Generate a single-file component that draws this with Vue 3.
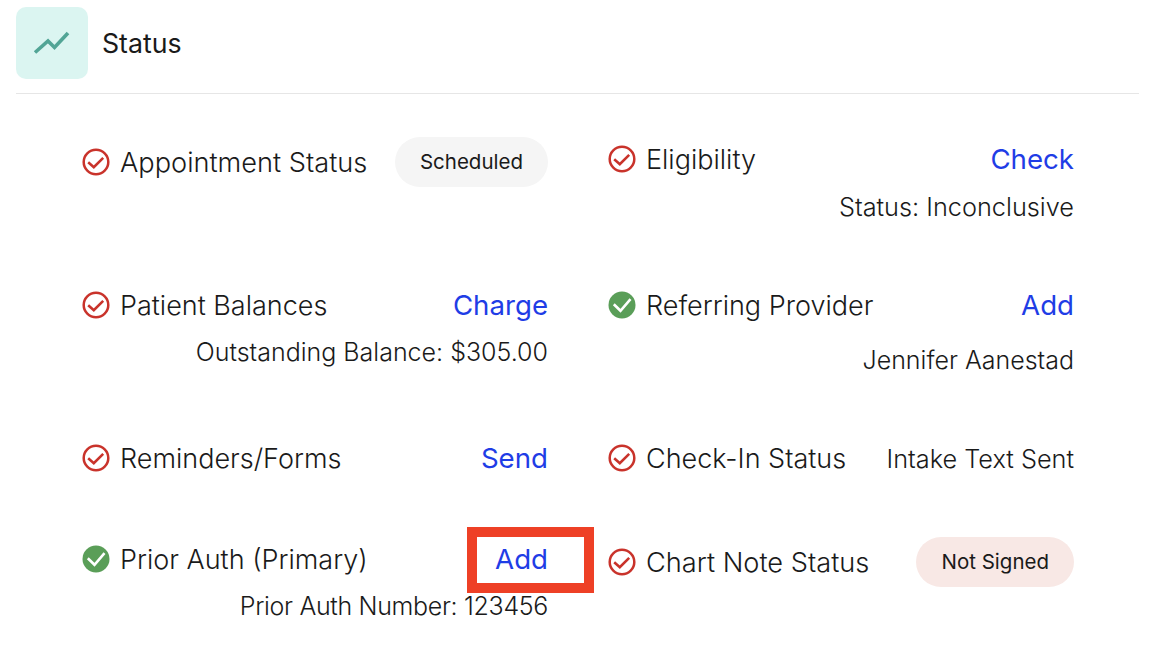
<script setup>
const items = [
  { label: 'Appointment Status', ok: false, pill: 'Scheduled', labelClass: 'label-wide' },
  { label: 'Eligibility', ok: false, link: 'Check', sub: 'Status: Inconclusive', subClass: 'sub-first' },
  { label: 'Patient Balances', ok: false, link: 'Charge', sub: 'Outstanding Balance: $305.00' },
  { label: 'Referring Provider', ok: true, link: 'Add', sub: 'Jennifer Aanestad', subClass: 'sub-low' },
  { label: 'Reminders/Forms', ok: false, link: 'Send' },
  { label: 'Check-In Status', ok: false, value: 'Intake Text Sent' },
  { label: 'Prior Auth (Primary)', ok: true, link: 'Add', sub: 'Prior Auth Number: 123456', subClass: 'sub-tight', marked: true },
  { label: 'Chart Note Status', ok: false, pill: 'Not Signed', pillClass: 'pill-red', labelClass: 'label-wide' }
]
</script>

<template>
  <div class="page">
    <header class="head">
      <div class="head-icon">
        <svg width="38" height="26" viewBox="0 0 38 26" fill="none">
          <path d="M2 22.5 L15 11 L21.5 17.5 L35 3" stroke="#52a596" stroke-width="3.6" />
        </svg>
      </div>
      <h1 class="title">Status</h1>
    </header>
    <div class="grid">
      <section v-for="item in items" :key="item.label" class="cell">
        <div class="line">
          <svg v-if="item.ok" class="icon" width="28" height="28" viewBox="0 0 28 28" fill="none">
            <circle cx="14" cy="14" r="13.5" fill="#5a9e58" />
            <path d="M5.8 13.2 L12.5 19.8 L22.5 8.2" stroke="#fff" stroke-width="2.6" />
          </svg>
          <svg v-else class="icon" width="28" height="28" viewBox="0 0 28 28" fill="none">
            <circle cx="14" cy="14" r="12.3" stroke="#c9332b" stroke-width="2.5" />
            <path d="M6.2 14.2 L11.8 19.2 L21.2 9.8" stroke="#c9332b" stroke-width="2.6" />
          </svg>
          <span class="label" :class="item.labelClass">{{ item.label }}</span>
          <span v-if="item.pill" class="pill" :class="item.pillClass">{{ item.pill }}</span>
          <a v-if="item.link" class="link">{{ item.link }}<i v-if="item.marked" class="mark"></i></a>
          <span v-if="item.value" class="value">{{ item.value }}</span>
        </div>
        <p v-if="item.sub" class="sub" :class="item.subClass">{{ item.sub }}</p>
      </section>
    </div>
  </div>
</template>

<style>
html, body { background: #fff; }
</style>

<style scoped>
.page {
  width: 1168px;
  height: 654px;
  overflow: hidden;
  box-sizing: border-box;
  padding: 7px 29px 0 16px;
  font-family: Inter, "Liberation Sans", sans-serif;
  font-weight: 300;
  color: #1a1a1a;
  background: #fff;
}
.head {
  display: flex;
  align-items: center;
  gap: 14px;
  padding-bottom: 14px;
  border-bottom: 1px solid #e6e6e6;
}
.head-icon {
  width: 72px;
  height: 72px;
  border-radius: 10px;
  background: #dbf5f1;
  display: flex;
  align-items: center;
  justify-content: center;
}
.title {
  margin: 0;
  font-size: 26.7px;
  font-weight: 400;
}
.grid {
  margin: 43px 65px 0 66px;
  display: grid;
  grid-template-columns: 466px 466px;
  column-gap: 60px;
  grid-template-rows: 146px 153px 101px;
}
.line {
  display: flex;
  align-items: center;
  min-height: 44px;
}
.icon {
  flex: none;
  margin-right: 10px;
}
.label {
  flex: 1;
  font-size: 27px;
}
.label-wide {
  font-size: 27.2px;
}
.link {
  position: relative;
  font-size: 27.65px;
  line-height: 32px;
  font-weight: 400;
  color: #1f3de6;
}
.value {
  font-size: 25.3px;
}
.pill {
  padding: 0 25px;
  height: 50px;
  line-height: 50px;
  border-radius: 25px;
  background: #f5f5f5;
  font-size: 20.5px;
  font-weight: 400;
}
.pill-red {
  background: #f8e8e5;
}
.mark {
  position: absolute;
  left: -28.5px;
  top: -16px;
  width: 107px;
  height: 46px;
  border: 10px solid #ee4026;
}
.sub {
  margin: 9px 0 0;
  text-align: right;
  font-size: 25px;
  line-height: 32px;
}
.sub-first {
  margin-top: 10px;
  font-size: 25.3px;
}
.sub-low {
  margin-top: 17px;
}
.sub-tight {
  letter-spacing: -0.33px;
}
</style>
